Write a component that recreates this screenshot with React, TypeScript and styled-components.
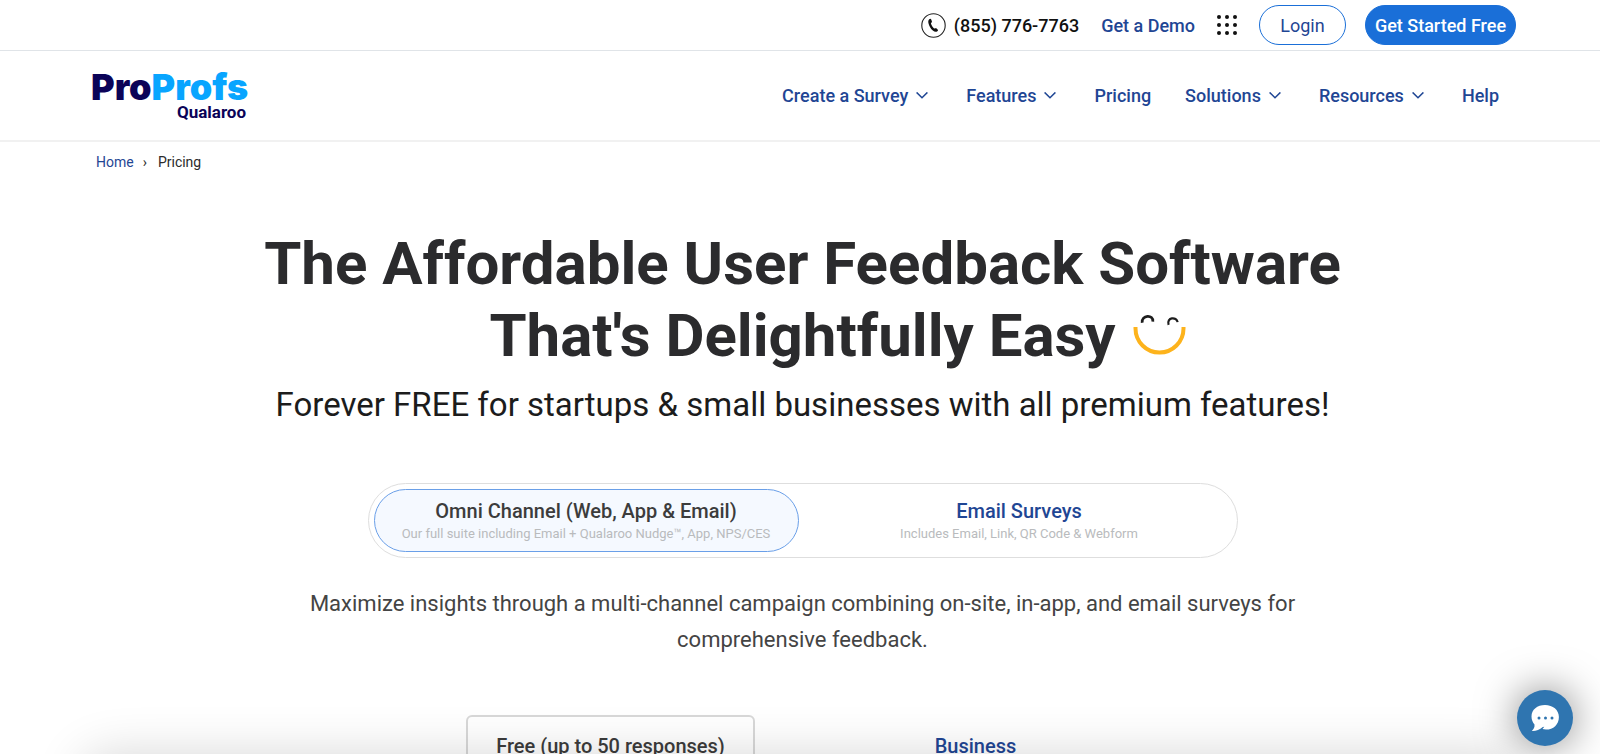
import React from "react";
import styled, { createGlobalStyle, css } from "styled-components";

const GlobalStyle = createGlobalStyle`
  *, *::before, *::after { box-sizing: border-box; }
  body {
    margin: 0;
    background: #fff;
    color: #2b2b2b;
    font-family: Roboto, "Liberation Sans", sans-serif;
  }
  a { text-decoration: none; color: inherit; }
  button { font-family: inherit; cursor: pointer; }
`;

const blue = "#1f4694";

const gutters = css`
  padding-left: 91px;
  padding-right: 84px;
`;

const Page = styled.div`
  min-height: 100vh;
  overflow: hidden;
`;

const TopBar = styled.div`
  ${gutters}
  display: flex;
  align-items: center;
  justify-content: flex-end;
  height: 51px;
  border-bottom: 1px solid #e0e4e8;
  font-size: 18px;
  font-weight: 500;
`;

const Phone = styled.a`
  display: flex;
  align-items: center;
  gap: 8px;
  margin-right: 22px;
  color: #111;
`;

const DemoLink = styled.a`
  margin-right: 22px;
  color: ${blue};
`;

const AppsButton = styled.button`
  display: flex;
  margin-right: 22px;
  padding: 0;
  border: 0;
  background: none;
`;

const PillLink = styled.a<{ $filled?: boolean }>`
  display: flex;
  align-items: center;
  justify-content: center;
  height: 40px;
  border: 1px solid #1a6fd8;
  border-radius: 20px;
  ${(p) =>
    p.$filled
      ? css`
          width: 151px;
          margin-left: 19px;
          background: #1a6fd8;
          color: #fff;
        `
      : css`
          width: 87px;
          color: ${blue};
          font-weight: 400;
        `}
`;

const Header = styled.header`
  ${gutters}
  display: flex;
  align-items: center;
  justify-content: space-between;
  height: 91px;
  border-bottom: 2px solid #f1f1f1;
`;

const Logo = styled.a`
  display: flex;
  flex-direction: column;
  align-items: flex-end;
  color: #0b0358;
`;

const Brand = styled.span`
  font: 900 36px/32px Inter, sans-serif;
`;

const BrandAccent = styled.span`
  color: #08a5ff;
`;

const Product = styled.span`
  padding-right: 2px;
  font-size: 17px;
  line-height: 18px;
  font-weight: 700;
`;

const Nav = styled.nav`
  display: flex;
  align-items: center;
`;

const NavItem = styled.a`
  display: flex;
  align-items: center;
  gap: 8px;
  padding: 0 17px;
  color: ${blue};
  font-size: 18px;
  line-height: 24px;
  font-weight: 500;

  svg { margin-right: 4px; }
`;

const Breadcrumb = styled.nav`
  ${gutters}
  display: flex;
  gap: 9px;
  margin-top: 10px;
  font-size: 14px;
  line-height: 20px;

  a { margin-left: 5px; color: ${blue}; }
  span:last-child { margin-left: 2px; }
`;

const Main = styled.main`
  display: flex;
  flex-direction: column;
  align-items: center;
  padding: 0 86px 0 91px;
  text-align: center;
`;

const Title = styled.h1`
  margin: 56px 0 0;
  color: #2b2b2d;
  font-size: 60px;
  line-height: 72px;
  font-weight: 700;
`;

const SmileAnchor = styled.span`
  position: relative;

  svg {
    position: absolute;
    left: 100%;
    top: 14px;
    margin-left: 17px;
  }
`;

const Subtitle = styled.p`
  margin: 13px 0 0;
  color: #1c1c1c;
  font-size: 33px;
  line-height: 40px;
`;

const Switcher = styled.div`
  display: flex;
  gap: 8px;
  width: 870px;
  max-width: 100%;
  margin-top: 58px;
  padding: 5px;
  border: 1px solid #dedede;
  border-radius: 38px;
`;

const SwitchOption = styled.button<{ $active?: boolean }>`
  flex: 1;
  display: flex;
  flex-direction: column;
  align-items: center;
  padding: 7px 0 8px;
  border: 1px solid ${(p) => (p.$active ? "#6a9fe8" : "transparent")};
  border-radius: 32px;
  background: ${(p) => (p.$active ? "#f5f9ff" : "transparent")};
  color: ${(p) => (p.$active ? "#3c3c3c" : blue)};
`;

const OptionTitle = styled.span`
  font-size: 20px;
  line-height: 28px;
  font-weight: 500;
`;

const OptionNote = styled.span`
  color: #b9bbbd;
  font-size: 13px;
  line-height: 18px;
`;

const Lead = styled.p`
  max-width: 1040px;
  margin: 28px 0 0;
  color: #444;
  font-size: 22px;
  line-height: 36px;
`;

const Plans = styled.div`
  display: flex;
  gap: 57px;
  margin-top: 57px;
`;

const Plan = styled.section<{ $featured?: boolean }>`
  width: ${(p) => (p.$featured ? 289 : 327)}px;
  height: 120px;
  padding-top: 16px;
  border: 2px solid ${(p) => (p.$featured ? "#d8d8d8" : "transparent")};
  border-radius: 6px;
  color: ${(p) => (p.$featured ? "#3c3c3c" : blue)};
`;

const PlanName = styled.h2`
  margin: 0;
  font-size: 20px;
  line-height: 26px;
  font-weight: 500;
`;

const BottomShade = styled.div`
  position: fixed;
  left: 80px;
  right: 80px;
  bottom: -60px;
  height: 60px;
  border-radius: 40px;
  box-shadow: 0 0 50px rgba(0, 0, 0, 0.16);
  pointer-events: none;
`;

const ChatButton = styled.button`
  position: fixed;
  right: 27px;
  bottom: 8px;
  display: flex;
  align-items: center;
  justify-content: center;
  width: 56px;
  height: 56px;
  padding: 0;
  border: 0;
  border-radius: 50%;
  background: #2f75b0;
  box-shadow: 0 0 40px rgba(0, 0, 0, 0.5);
`;

const PhoneIcon = () => (
  <svg width="25" height="25" viewBox="0 0 25 25" fill="none" aria-hidden="true">
    <circle cx="12.5" cy="12.5" r="11.7" stroke="#222" strokeWidth="1.1" />
    <path
      d="M8.200 6.300c.9-.8 1.600-.7 1.900 0l.8 2c.2.600 0 1-.5 1.400-.5.400-.5.900-.2 1.600.5 1.500 1.300 2.800 2.400 3.800.5.500.9.500 1.500.2.600-.3 1.100-.2 1.500.2l1.200 1.300c.4.500.2 1-.4 1.400-1.300.9-2.900.7-4.600-.7-2.300-2-3.800-4.600-4.400-7.500-.3-1.600 0-2.900.8-3.700z"
      fill="#111"
    />
  </svg>
);

const AppsIcon = () => (
  <svg width="20" height="20" viewBox="0 0 20 20" fill="#111" aria-hidden="true">
    {[2, 10, 18].map((y) => [2, 10, 18].map((x) => <circle key={`${x}-${y}`} cx={x} cy={y} r="2" />))}
  </svg>
);

const Chevron = () => (
  <svg width="12" height="8" viewBox="0 0 12 8" fill="none" stroke={blue} strokeWidth="1.5" aria-hidden="true">
    <path d="M.6.4 6 5.800 11.400.4" />
  </svg>
);

const Smile = () => (
  <svg width="54" height="42" viewBox="0 0 54 42" fill="none" aria-hidden="true">
    <path d="M2.500 13v1.500a24 24 0 0 0 48 0V13" stroke="#fdb31c" strokeWidth="4" />
    <path d="M9.200 8.800C8 .6 21 .2 19.800 7.600" stroke="#1d1d1d" strokeWidth="2.800" />
    <path d="M35.600 10.800C33.200 3.200 43.800 2.200 44.600 8.200" stroke="#1d1d1d" strokeWidth="2.200" />
  </svg>
);

const ChatIcon = () => (
  <svg width="28" height="28" viewBox="0 0 28 28" aria-hidden="true">
    <path
      d="M14 1C6.300 1 .5 5.700 .5 12.500c0 3.500 1.400 6.100 3 8 .3 2.700-.7 4.700-2.700 6.500 4.200.2 7.600-1.100 11-3.900l1.500-.4-1.800 2.400c1.100.3 2.200.5 3.500.5 7.300 0 12.900-5.200 12.900-12.700C27.900 6 21.800 1 14 1z"
      fill="#fff"
    />
    <g fill="#2f75b0">
      <circle cx="8" cy="14" r="1.500" />
      <circle cx="14.500" cy="14" r="1.500" />
      <circle cx="21" cy="14" r="1.500" />
    </g>
  </svg>
);

const navItems = [
  { label: "Create a Survey", menu: true },
  { label: "Features", menu: true },
  { label: "Pricing", menu: false },
  { label: "Solutions", menu: true },
  { label: "Resources", menu: true },
  { label: "Help", menu: false },
];

export default function App() {
  return (
    <Page>
      <GlobalStyle />
      <TopBar>
        <Phone href="tel:+18557767763">
          <PhoneIcon />
          (855) 776-7763
        </Phone>
        <DemoLink href="#demo">Get a Demo</DemoLink>
        <AppsButton type="button" aria-label="All products">
          <AppsIcon />
        </AppsButton>
        <PillLink href="#login">Login</PillLink>
        <PillLink href="#signup" $filled>
          Get Started Free
        </PillLink>
      </TopBar>
      <Header>
        <Logo href="#home">
          <Brand>
            Pro<BrandAccent>Profs</BrandAccent>
          </Brand>
          <Product>Qualaroo</Product>
        </Logo>
        <Nav aria-label="Main">
          {navItems.map((item) => (
            <NavItem key={item.label} href="#menu">
              {item.label}
              {item.menu && <Chevron />}
            </NavItem>
          ))}
        </Nav>
      </Header>
      <Breadcrumb aria-label="Breadcrumb">
        <a href="#home">Home</a>
        <span>›</span>
        <span>Pricing</span>
      </Breadcrumb>
      <Main>
        <Title>
          The Affordable User Feedback Software
          <br />
          <SmileAnchor>
            That's Delightfully Easy
            <Smile />
          </SmileAnchor>
        </Title>
        <Subtitle>Forever FREE for startups &amp; small businesses with all premium features!</Subtitle>
        <Switcher>
          <SwitchOption type="button" $active>
            <OptionTitle>Omni Channel (Web, App &amp; Email)</OptionTitle>
            <OptionNote>Our full suite including Email + Qualaroo Nudge™, App, NPS/CES</OptionNote>
          </SwitchOption>
          <SwitchOption type="button">
            <OptionTitle>Email Surveys</OptionTitle>
            <OptionNote>Includes Email, Link, QR Code &amp; Webform</OptionNote>
          </SwitchOption>
        </Switcher>
        <Lead>
          Maximize insights through a multi-channel campaign combining on-site, in-app, and email surveys for
          comprehensive feedback.
        </Lead>
        <Plans>
          <Plan $featured>
            <PlanName>Free (up to 50 responses)</PlanName>
          </Plan>
          <Plan>
            <PlanName>Business</PlanName>
          </Plan>
        </Plans>
      </Main>
      <BottomShade />
      <ChatButton type="button" aria-label="Open chat">
        <ChatIcon />
      </ChatButton>
    </Page>
  );
}
